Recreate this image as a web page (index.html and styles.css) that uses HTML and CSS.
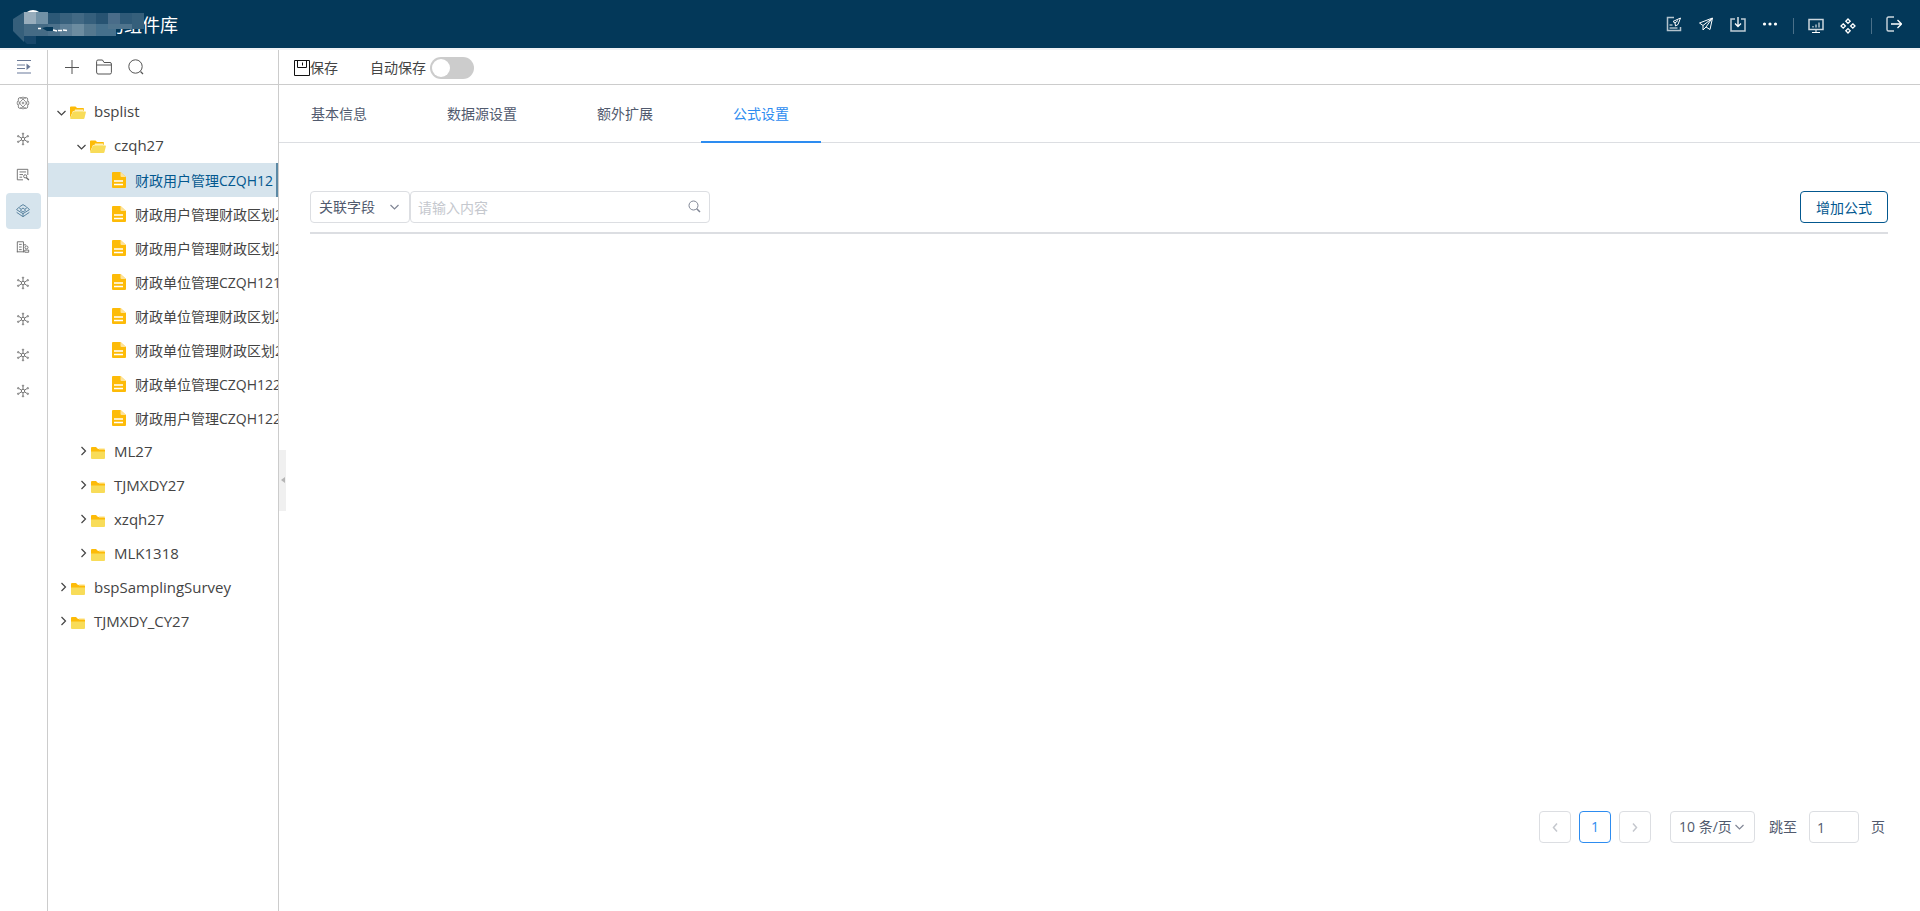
FILE: index.html
```html
<!DOCTYPE html>
<html lang="zh-CN">
<head>
<meta charset="utf-8">
<title>组件库</title>
<link rel="stylesheet" href="styles.css">
</head>
<body>
<svg class="sprite" aria-hidden="true">
  <symbol id="hub" viewBox="0 0 16 16"><g fill="none" stroke="currentColor"><circle cx="8" cy="8" r="2"/><path d="M8 6V3M8 10v3M6.300 7L3.500 5.300M9.700 7l2.800-1.700M6.300 9l-2.800 1.700M9.700 9l2.800 1.700"/><circle cx="8" cy="2" r=".8"/><circle cx="8" cy="14" r=".8"/><circle cx="2.500" cy="4.800" r=".8"/><circle cx="13.500" cy="4.800" r=".8"/><circle cx="2.500" cy="11.200" r=".8"/><circle cx="13.500" cy="11.200" r=".8"/></g></symbol>
  <symbol id="down" viewBox="0 0 16 16"><path d="M3.500 7l4 4 4-4" fill="none" stroke="currentColor" stroke-width="1.200"/></symbol>
  <symbol id="right" viewBox="0 0 16 16"><path d="M7.500 3l4 4-4 4" fill="none" stroke="currentColor" stroke-width="1.200"/></symbol>
  <symbol id="folder-open" viewBox="0 0 16 16"><g transform="translate(0 1)"><path d="M0 2.500q0-1 1-1h4.500l1.500 1.500h6q1 0 1 1V6H0z" fill="#fdbb08"/><path d="M0 2v11l3-7h11V4z" fill="#fdbb08"/><path d="M5 4.500h8.500V7H4z" fill="#fff0b8"/><path d="M3 6.500h12.500q.6 0 .4.700L14.500 13q-.2 1-1 1H1q-1 0-.8-1z" fill="#f8dc59"/></g></symbol>
  <symbol id="folder" viewBox="0 0 16 16"><g transform="translate(0 1)"><path d="M1 3q0-1 1-1h4l2 2h6q1 0 1 1v3H1z" fill="#fdbb08"/><path d="M8.500 3H14q1 0 1 1v.5H9z" fill="#fff0b8"/><path d="M1 6.500h14V13q0 1-1 1H2q-1 0-1-1z" fill="#f8dc59"/></g></symbol>
  <symbol id="doc" viewBox="0 0 16 16"><path d="M2 0h7.500L15 5v10q0 1-1 1H2q-1 0-1-1V1q0-1 1-1z" fill="#fdbb08"/><path d="M9.500 0L15 5h-4.500q-1 0-1-1z" fill="#fee39a"/><path d="M3 9h9M3 12.500h9" stroke="#fff" stroke-width="1.500"/></symbol>
  <symbol id="search" viewBox="0 0 16 16"><g fill="none" stroke="currentColor"><circle cx="6.500" cy="6.500" r="4.500"/><path d="M9.700 9.700L13 13" stroke-width="1.500"/></g></symbol>
</svg>

<header class="header">
  <div class="brand">
    <h1 class="brand-name">的组件库</h1>
    <svg class="mosaic" width="140" height="40" viewBox="8 6 140 40" aria-hidden="true">
      <ellipse cx="33" cy="16" rx="8" ry="6" fill="#fff"/>
      <path d="M13 24L13 19 24 12V24zM13 24H24V42L13 31z" fill="#355f7b"/>
      <path d="M24 36h12v8H27l-3-3z" fill="#17476a"/>
      <path d="M24 12h12v12H24z" fill="#98adbc"/><path d="M36 12h12v12H36z" fill="#7191a6"/>
      <path d="M24 24h12v12H24z" fill="#456b85"/><path d="M36 24h12v12H36z" fill="#456b85"/>
      <path d="M48 13h12v15H48z" fill="#2c5876"/><path d="M60 13h12v11H60z" fill="#38617d"/><path d="M72 13h12v11H72z" fill="#426984"/><path d="M84 13h12v11H84z" fill="#355f7c"/><path d="M96 13h12v11H96z" fill="#275372"/><path d="M108 13h12v11h-12z" fill="#496c89"/><path d="M120 13h12v16h-12z" fill="#2f5a78"/><path d="M132 13h12v16h-12z" fill="#355f7b"/>
      <path d="M48 24h12v12H48z" fill="#4c718b"/><path d="M60 24h12v12H60z" fill="#5d7f97"/>
      <path d="M72 24h12v12H72z" fill="#6c8ca0"/><path d="M84 24h12v12H84z" fill="#54788f"/><path d="M96 24h20v12H96z" fill="#45708c"/><path d="M108 24h24v5h-24z" fill="#4f748d"/>
      <path d="M42 28l4-1h7v4h-6z" fill="#033859"/>
      <path d="M38 28.500h3M53 30l4 1M58 30.500h4M63 30l4 .5" fill="none" stroke="#fff" stroke-width="1.300"/>
    </svg>
  </div>
  <nav class="header-actions" aria-label="工具">
    <button class="icon-button" aria-label="表单发布"><svg viewBox="0 0 16 16"><g fill="none" stroke="currentColor"><path d="M8 1.500H1.500v13h13V11" stroke-width="1.500" opacity=".7"/><path d="M3.500 12h8M3.500 9h3"/><path d="M14.500 2L7 5.500l2 1.500.5 3L12 8.500zM9 7l3-2.500"/></g></svg></button>
    <button class="icon-button" aria-label="发送"><svg viewBox="0 0 16 16"><path d="M14.500 2L1.500 7l3.500 2.500V14l3-3 4 2.500zM5 9.500L14 2.500 8 11" fill="none" stroke="currentColor"/></svg></button>
    <button class="icon-button" aria-label="下载"><svg viewBox="0 0 16 16"><path d="M5 3H1v12h14V3h-4" fill="none" stroke="currentColor" stroke-width="1.500" opacity=".75"/><path d="M8 1v9M5 7.500l3 3 3-3" fill="none" stroke="currentColor" stroke-width="1.300"/></svg></button>
    <button class="icon-button" aria-label="更多"><svg viewBox="0 0 16 16"><g fill="currentColor"><circle cx="2.500" cy="8" r="1.600"/><circle cx="8" cy="8" r="1.600"/><circle cx="13.500" cy="8" r="1.600"/></g></svg></button>
    <span class="separator"></span>
    <button class="icon-button low" aria-label="监控"><svg viewBox="0 0 16 16"><g fill="none" stroke="currentColor"><rect x="1" y="1.500" width="14" height="10" stroke-width="1.500" opacity=".8"/><path d="M5 9.500V8M8 9.500V6.500M11 9.500V4.500M8 12v3M4 14.500h8"/></g></svg></button>
    <button class="icon-button low" aria-label="组件"><svg viewBox="0 0 16 16"><path d="M8 1l2.200 2.200L8 5.400 5.800 3.200zM8 10.600l2.200 2.200L8 15l-2.200-2.200zM3.200 5.800L5.400 8l-2.200 2.200L1 8zM12.800 5.800L15 8l-2.200 2.200L10.600 8z" fill="none" stroke="currentColor" stroke-width="1.300"/></svg></button>
    <span class="separator"></span>
    <button class="icon-button" aria-label="退出"><svg viewBox="0 0 16 16"><path d="M8 1H2.500Q1 1 1 2.500v11Q1 15 2.500 15H8" fill="none" stroke="currentColor" stroke-width="1.400" opacity=".8"/><path d="M5 8h10.500M11.500 4l4 4-4 4" fill="none" stroke="currentColor" stroke-width="1.300"/></svg></button>
  </nav>
</header>

<div class="workspace">
  <nav class="rail" aria-label="模块">
    <div class="rail-top"><button class="icon-button" aria-label="展开菜单"><svg viewBox="0 0 16 16"><path d="M1 1.500h14M1 6h8M1 9.500h8" stroke="#6b7a97"/><path d="M10.500 4.500v6.500l4-3.200z" fill="#6b7a97"/><path d="M1 14h14" stroke="#b4bccd" stroke-width="2"/></svg></button></div>
    <button class="rail-item" aria-label="模型"><svg viewBox="0 0 16 16"><g fill="none" stroke="currentColor" stroke-width=".8"><ellipse cx="8" cy="8" rx="3.200" ry="7.500" transform="rotate(40 8 8)"/><ellipse cx="8" cy="8" rx="3.200" ry="7.500" transform="rotate(-40 8 8)"/><path d="M4.500 2.500Q8 0 11.500 2.500M4.500 13.500Q8 16 11.500 13.500M2 5.500Q.5 8 2 10.500M14 5.500Q15.500 8 14 10.500"/><circle cx="8" cy="8" r="1"/></g></svg></button>
    <button class="rail-item" aria-label="关系"><svg><use href="#hub"/></svg></button>
    <button class="rail-item" aria-label="表单工具"><svg viewBox="0 0 16 16"><path d="M8 13.500H1.500v-12h12V8M4 4.500h7.500M4 7.500h4M4 10.500h3" fill="none" stroke="currentColor"/><circle cx="10.500" cy="9.500" r="1.800" fill="none" stroke="currentColor"/><path d="M11.700 10.800l3 3" stroke="currentColor" stroke-width="1.500"/></svg></button>
    <button class="rail-item active" aria-label="组件库"><svg viewBox="0 0 16 16"><path d="M8 .7L4 3.200M8 .7l4 2.500M3 4L.7 6.500 8 11l7.300-4.500L13 4M.7 9.500L8 14.500l7.300-5M8 4.500L11 7 8 9.200 5 7zM3 4l2.500 1.500M13 4l-2.500 1.500M8 11v3" fill="none" stroke="currentColor" stroke-width=".9"/></svg></button>
    <button class="rail-item" aria-label="机构"><svg viewBox="0 0 16 16"><path d="M1.500 14V2h7v12M1 13.500h8M3.500 5h3M3.500 8h3M3.500 11h3M8.500 5.500h3" fill="none" stroke="currentColor"/><circle cx="12" cy="8.500" r="1.700" fill="none" stroke="currentColor"/><path d="M10 14v-2.500h4.500V14z" fill="none" stroke="currentColor"/></svg></button>
    <button class="rail-item" aria-label="关系二"><svg><use href="#hub"/></svg></button>
    <button class="rail-item" aria-label="关系三"><svg><use href="#hub"/></svg></button>
    <button class="rail-item" aria-label="关系四"><svg><use href="#hub"/></svg></button>
    <button class="rail-item" aria-label="关系五"><svg><use href="#hub"/></svg></button>
  </nav>

  <aside class="sidebar">
    <div class="sidebar-tools">
      <button class="icon-button" aria-label="新增"><svg viewBox="0 0 16 16"><path d="M8 1v14M1 8.500h14" stroke="currentColor"/></svg></button>
      <button class="icon-button" aria-label="文件夹"><svg viewBox="0 0 16 16"><path d="M.6 13V2.500Q.6 1 2 1h4.500L8 3.500h6q1.400 0 1.400 1.500v8.500q0 1.500-1.400 1.500H2Q.6 15 .6 13zM.6 6h14.800" fill="none" stroke="currentColor"/></svg></button>
      <button class="icon-button" aria-label="搜索"><svg viewBox="0 0 16 16"><circle cx="7.500" cy="7.500" r="6.700" fill="none" stroke="currentColor"/><path d="M12.500 12.500L15 15" stroke="currentColor" stroke-width="1.300"/></svg></button>
    </div>
    <ul class="tree">
      <li class="node"><svg><use href="#down"/></svg><svg><use href="#folder-open"/></svg><span class="label">bsplist</span></li>
      <li class="node child"><svg><use href="#down"/></svg><svg><use href="#folder-open"/></svg><span class="label">czqh27</span></li>
      <li class="node leaf selected"><svg><use href="#doc"/></svg><span class="label">财政用户管理CZQH12</span></li>
      <li class="node leaf"><svg><use href="#doc"/></svg><span class="label">财政用户管理财政区划2</span></li>
      <li class="node leaf"><svg><use href="#doc"/></svg><span class="label">财政用户管理财政区划2</span></li>
      <li class="node leaf"><svg><use href="#doc"/></svg><span class="label">财政单位管理CZQH121</span></li>
      <li class="node leaf"><svg><use href="#doc"/></svg><span class="label">财政单位管理财政区划2</span></li>
      <li class="node leaf"><svg><use href="#doc"/></svg><span class="label">财政单位管理财政区划2</span></li>
      <li class="node leaf"><svg><use href="#doc"/></svg><span class="label">财政单位管理CZQH122</span></li>
      <li class="node leaf"><svg><use href="#doc"/></svg><span class="label">财政用户管理CZQH122</span></li>
      <li class="node child"><svg><use href="#right"/></svg><svg><use href="#folder"/></svg><span class="label">ML27</span></li>
      <li class="node child"><svg><use href="#right"/></svg><svg><use href="#folder"/></svg><span class="label">TJMXDY27</span></li>
      <li class="node child"><svg><use href="#right"/></svg><svg><use href="#folder"/></svg><span class="label">xzqh27</span></li>
      <li class="node child"><svg><use href="#right"/></svg><svg><use href="#folder"/></svg><span class="label">MLK1318</span></li>
      <li class="node"><svg><use href="#right"/></svg><svg><use href="#folder"/></svg><span class="label">bspSamplingSurvey</span></li>
      <li class="node"><svg><use href="#right"/></svg><svg><use href="#folder"/></svg><span class="label">TJMXDY_CY27</span></li>
    </ul>
  </aside>

  <main class="main">
    <button class="collapse" aria-label="收起侧栏"><svg viewBox="0 0 4 6"><path d="M4 0v6L0 3z" fill="#b5b5b5"/></svg></button>
    <div class="toolbar">
      <button class="save"><svg viewBox="0 0 16 16"><path d="M.5.5h15v15H.5zM3.500.5v7h9v-7M8.500 2.500v3" fill="none" stroke="#111"/></svg>保存</button>
      <label class="auto-save">自动保存<input class="switch" type="checkbox" role="switch"></label>
    </div>
    <div class="tabs" role="tablist">
      <button class="tab" role="tab">基本信息</button>
      <button class="tab" role="tab">数据源设置</button>
      <button class="tab" role="tab">额外扩展</button>
      <button class="tab current" role="tab" aria-selected="true">公式设置</button>
    </div>
    <section class="panel">
      <div class="filter">
        <div class="select-box field-select">
          <select aria-label="筛选字段"><option>关联字段</option></select>
          <svg><use href="#down"/></svg>
        </div>
        <div class="search-box">
          <input type="text" placeholder="请输入内容" aria-label="搜索内容">
          <svg><use href="#search"/></svg>
        </div>
        <button class="add">增加公式</button>
      </div>
      <div class="pagination">
        <button class="page" aria-label="上一页" disabled><svg viewBox="0 0 16 16"><path d="M10 4.500L6.500 8.500l3.500 4" fill="none" stroke="currentColor" stroke-width="1.500"/></svg></button>
        <button class="page current">1</button>
        <button class="page" aria-label="下一页" disabled><svg viewBox="0 0 16 16"><path d="M6 4.500l3.500 4-3.500 4" fill="none" stroke="currentColor" stroke-width="1.500"/></svg></button>
        <div class="select-box size-select">
          <select aria-label="每页条数"><option>10 条/页</option></select>
          <svg><use href="#down"/></svg>
        </div>
        <label class="jump">跳至<input type="text" value="1">页</label>
      </div>
    </section>
  </main>
</div>
</body>
</html>
```

FILE: styles.css
```css
* { box-sizing: border-box; }

body {
  margin: 0;
  height: 100vh;
  display: flex;
  flex-direction: column;
  font: 14px/20px "Open Sans", "Noto Sans CJK SC", sans-serif;
  color: #444;
  background: #fff;
}

button, input, select { font: inherit; color: inherit; }
button { padding: 0; border: 0; background: none; cursor: pointer; }
svg { width: 16px; height: 16px; flex: none; display: block; }
.sprite { position: absolute; width: 0; height: 0; }

.header {
  height: 50px;
  flex: none;
  display: flex;
  justify-content: space-between;
  align-items: center;
  padding-right: 18px;
  background: #033859;
  border-bottom: 2px solid #f0f2f5;
  color: #fff;
}
.brand { position: relative; padding: 2px 0 0 106px; }
.brand-name { margin: 0; font-size: 18px; line-height: 24px; font-weight: 400; }
.mosaic { position: absolute; left: 8px; top: -5px; width: 140px; height: 40px; }
.header-actions { display: flex; align-items: center; gap: 16px; }
.header-actions .low { padding-top: 4px; }
.separator { width: 1px; height: 16px; margin: 4px -2px 0 -1px; background: #4a7089; }

.workspace { flex: 1; min-height: 0; display: flex; }

.rail {
  width: 48px;
  flex: none;
  display: flex;
  flex-direction: column;
  align-items: center;
  border-right: 1px solid #ccc;
  color: #666;
}
.rail-top {
  width: 100%;
  height: 35px;
  display: flex;
  align-items: center;
  justify-content: center;
  border-bottom: 1px solid #ccc;
}
.rail-item {
  width: 35px;
  height: 36px;
  display: flex;
  align-items: center;
  justify-content: center;
  padding: 0 1px 1px 0;
  border-radius: 4px;
}
.rail-item svg { width: 14px; height: 14px; }
.rail-item.active { background: #d6e4ed; color: #37688a; }

.sidebar { width: 231px; flex: none; border-right: 1px solid #ccc; overflow: hidden; }
.sidebar-tools {
  height: 35px;
  display: flex;
  align-items: center;
  gap: 16px;
  padding-left: 16px;
  border-bottom: 1px solid #ccc;
  color: #555;
}
.tree { list-style: none; margin: 0; padding: 10px 0; }
.node {
  height: 34px;
  display: flex;
  align-items: center;
  padding-left: 6px;
  font-size: 15px;
  white-space: nowrap;
}
.node.child { padding-left: 26px; }
.node.leaf { padding-left: 63px; font-size: 14px; }
.label { margin-left: 8px; padding-bottom: 2px; }
.leaf .label { padding: 1px 0 0; }
.node.selected { background: #d6e4ed; color: #03588f; border-right: 2px solid #5c89a5; }

.main { flex: 1; min-width: 0; position: relative; display: flex; flex-direction: column; }
.collapse {
  position: absolute;
  left: 0;
  top: 50%;
  width: 7px;
  height: 61px;
  margin-top: -31px;
  display: flex;
  align-items: center;
  justify-content: center;
  background: #f0f0f0;
}
.collapse svg { width: 4px; height: 6px; }

.toolbar {
  height: 35px;
  flex: none;
  display: flex;
  align-items: center;
  gap: 32px;
  padding: 2px 0 0 15px;
  border-bottom: 1px solid #ccc;
}
.save { display: flex; align-items: center; }
.auto-save { display: flex; align-items: center; gap: 4px; }
.switch {
  appearance: none;
  width: 44px;
  height: 22px;
  margin: 0;
  padding: 2px;
  border-radius: 11px;
  background: #ccc;
}
.switch::before {
  content: "";
  display: block;
  width: 18px;
  height: 18px;
  border-radius: 50%;
  background: #fff;
}
.switch:checked { background: #2d8cf0; }
.switch:checked::before { margin-left: auto; }

.tabs {
  height: 58px;
  flex: none;
  display: flex;
  gap: 16px;
  color: #515a6e;
  box-shadow: inset 0 -1px #dcdee2;
}
.tab { padding: 2px 32px 0; border-bottom: 2px solid transparent; }
.tab.current { color: #2d8cf0; border-color: #2d8cf0; }

.panel {
  flex: 1;
  display: flex;
  flex-direction: column;
  justify-content: space-between;
  padding: 48px 32px 68px 31px;
  color: #515a6e;
}
.filter { display: flex; padding-bottom: 9px; border-bottom: 2px solid #dcdee2; }
.select-box, .search-box { position: relative; height: 32px; }
.select-box select, .search-box input, .jump input {
  width: 100%;
  height: 32px;
  padding: 0 7px;
  border: 1px solid #dcdee2;
  border-radius: 4px;
  background: #fff;
  appearance: none;
}
.select-box select { padding: 0 8px; }
.select-box svg, .search-box svg {
  position: absolute;
  right: 7px;
  top: 8px;
  color: #808695;
  pointer-events: none;
}
.select-box svg { top: 7px; }
.field-select { width: 100px; }
.search-box { width: 300px; }
input::placeholder { color: #c5c8ce; opacity: 1; }
.add {
  width: 88px;
  height: 32px;
  margin-left: auto;
  padding-top: 1px;
  border: 1px solid #03588f;
  border-radius: 4px;
  color: #03588f;
}

.pagination { display: flex; justify-content: flex-end; align-items: center; gap: 8px; }
.page {
  width: 32px;
  height: 32px;
  display: flex;
  align-items: center;
  justify-content: center;
  border: 1px solid #dcdee2;
  border-radius: 4px;
}
.page:disabled { color: #c5c8ce; }
.page.current { border-color: #2d8cf0; color: #2d8cf0; }
.size-select { width: 85px; margin-left: 11px; }
.jump { display: flex; align-items: center; gap: 12px; margin: 0 3px 0 6px; }
.jump input { width: 50px; }
```
